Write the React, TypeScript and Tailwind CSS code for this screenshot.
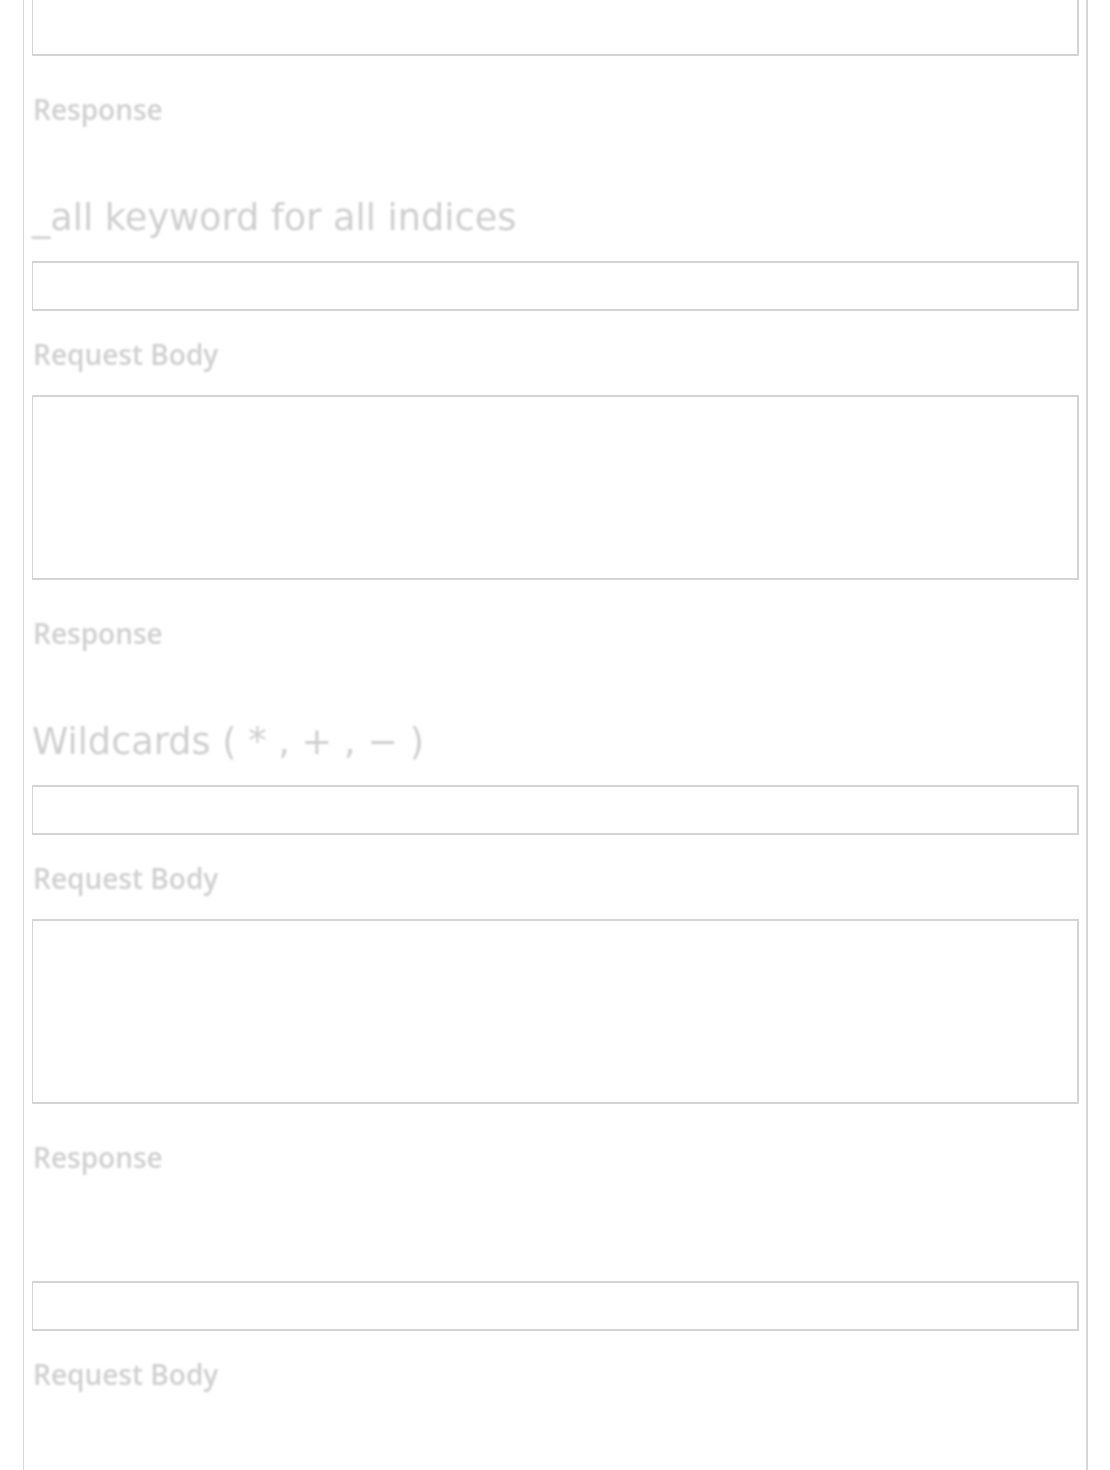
import React from "react";

const box = "border-y-2 border-r-2 border-l border-[#d4d4d4] bg-white";
const label =
  "h-[38px] leading-[38px] pl-[1px] text-[28px] font-semibold text-[#d0d0d0] blur-[1px] font-['Open_Sans',sans-serif]";

type SectionProps = { title?: string; last?: boolean };

const Section: React.FC<SectionProps> = ({ title, last }) => {
  return (
    <div className="flex flex-col">
      {title ? (
        <h2 className="mt-[68px] mb-[21px] h-[44px] leading-[44px] text-[36.7px] font-normal text-[#cfcfcf] blur-[1.1px] font-['DejaVu_Sans',sans-serif] whitespace-nowrap">
          {title}
        </h2>
      ) : (
        <div className="h-[105px]" />
      )}
      <div className={`h-[50px] ${box}`} />
      <p className={`mt-[24px] ${label}`}>Request Body</p>
      {!last && (
        <>
          <div className={`mt-[22px] h-[185px] ${box}`} />
          <p className={`mt-[34px] ${label}`}>Response</p>
        </>
      )}
    </div>
  );
};

const App: React.FC = () => {
  return (
    <div className="h-[1470px] overflow-hidden bg-white">
      <div className="ml-[23px] w-[1065px] h-full border-l border-r-2 border-[#d6d6d6] pl-2 pr-[7px]">
        <div className="h-[56px] border-b-2 border-r-2 border-l border-[#d4d4d4]" />
        <p className={`mt-[34px] ${label}`}>Response</p>
        <Section title="_all keyword for all indices" />
        <Section title="Wildcards ( * , + , − )" />
        <Section last />
      </div>
    </div>
  );
};

export default App;
